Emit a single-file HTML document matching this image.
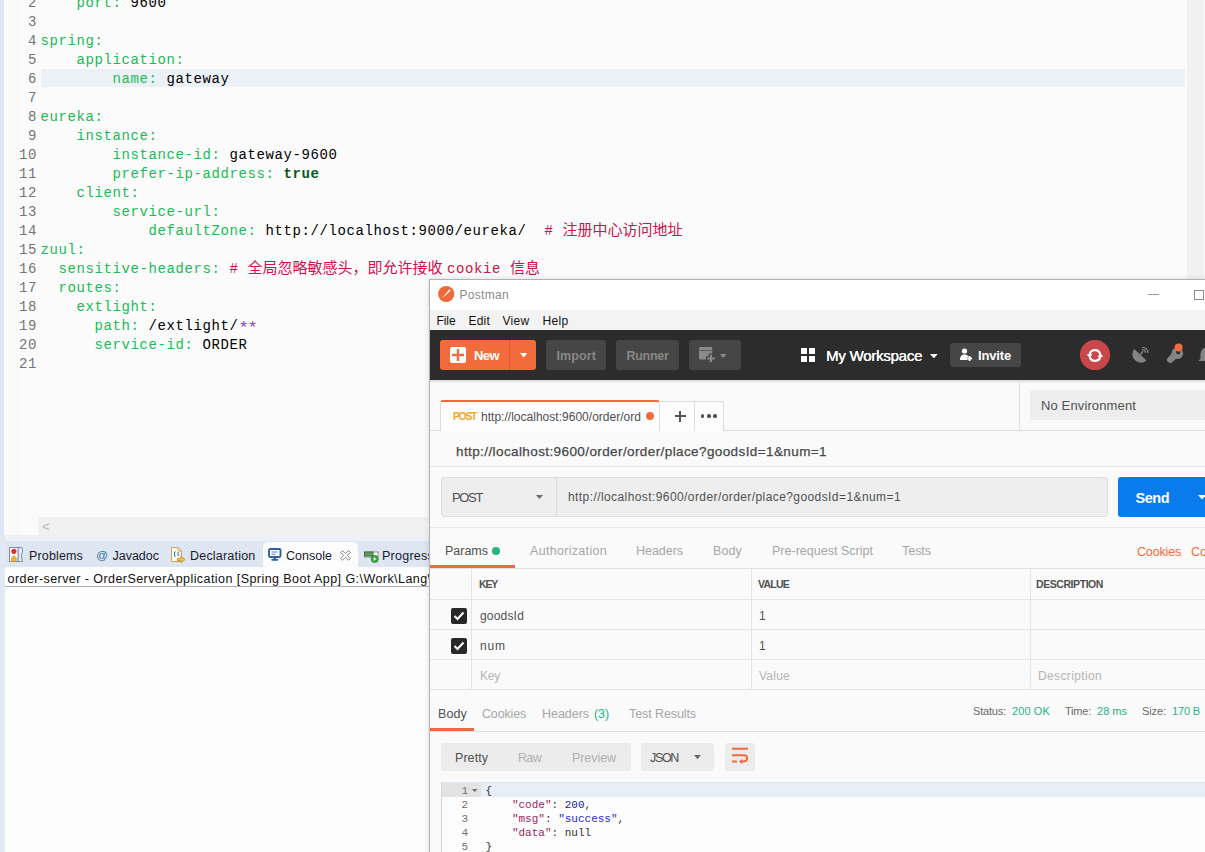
<!DOCTYPE html>
<html><head><meta charset="utf-8"><title>gateway</title>
<style>
html,body{margin:0;padding:0;}
body{width:1205px;height:852px;overflow:hidden;position:relative;background:#fbfbfb;font-family:"Liberation Sans","Noto Sans CJK SC",sans-serif;}
.abs{position:absolute;}
.t{position:absolute;white-space:nowrap;font-family:"Liberation Sans","Noto Sans CJK SC",sans-serif;}
#ed{position:absolute;left:0;top:0;width:1205px;height:535px;background:#fbfbfb;}
#ed .strip{position:absolute;left:0;top:0;width:3.5px;height:540px;background:#dde8f6;}
#ed .ruler{position:absolute;left:8px;top:0;width:13px;height:535px;background:#f9f9f9;}
.ln{position:absolute;left:0;width:37px;text-align:right;font:14px/19px "Liberation Mono",monospace;letter-spacing:.6px;color:#747474;height:19px;}
.cl{position:absolute;left:40.5px;font:14px/19px "Liberation Mono","Noto Sans CJK SC",monospace;letter-spacing:.6px;color:#000;height:19px;white-space:pre;}
.k{color:#20ba56;}
.c{color:#d0104c;}
.b{color:#0a5a1e;font-weight:bold;}
.p{color:#8a3fd0;font-size:17px;line-height:0;letter-spacing:-1.2px;position:relative;top:2.5px;}
.cj{font-family:"Noto Sans CJK SC",sans-serif;font-size:15px;line-height:0;letter-spacing:0;}
#hl{position:absolute;left:41px;top:69px;width:1144px;height:18px;background:#ecf1f7;}
</style></head><body>
<div id="ed"><div class="strip"></div><div class="ruler"></div><div id="hl"></div>
<div class="ln" style="top:-6px">2</div>
<div class="cl" style="top:-6px"><span class="k">    port:</span> 9600</div>
<div class="ln" style="top:13px">3</div>
<div class="ln" style="top:32px">4</div>
<div class="cl" style="top:32px"><span class="k">spring:</span></div>
<div class="ln" style="top:51px">5</div>
<div class="cl" style="top:51px"><span class="k">    application:</span></div>
<div class="ln" style="top:70px">6</div>
<div class="cl" style="top:70px"><span class="k">        name:</span> gateway</div>
<div class="ln" style="top:89px">7</div>
<div class="ln" style="top:108px">8</div>
<div class="cl" style="top:108px"><span class="k">eureka:</span></div>
<div class="ln" style="top:127px">9</div>
<div class="cl" style="top:127px"><span class="k">    instance:</span></div>
<div class="ln" style="top:146px">10</div>
<div class="cl" style="top:146px"><span class="k">        instance-id:</span> gateway-9600</div>
<div class="ln" style="top:165px">11</div>
<div class="cl" style="top:165px"><span class="k">        prefer-ip-address:</span> <span class="b">true</span></div>
<div class="ln" style="top:184px">12</div>
<div class="cl" style="top:184px"><span class="k">    client:</span></div>
<div class="ln" style="top:203px">13</div>
<div class="cl" style="top:203px"><span class="k">        service-url:</span></div>
<div class="ln" style="top:222px">14</div>
<div class="cl" style="top:222px"><span class="k">            defaultZone:</span> http://localhost:9000/eureka/  <span class="c"># </span><span class="c cj">注册中心访问地址</span></div>
<div class="ln" style="top:241px">15</div>
<div class="cl" style="top:241px"><span class="k">zuul:</span></div>
<div class="ln" style="top:260px">16</div>
<div class="cl" style="top:260px"><span class="k">  sensitive-headers:</span> <span class="c"># </span><span class="c cj">全局忽略敏感头，即允许接收</span></div>
<div class="ln" style="top:279px">17</div>
<div class="cl" style="top:279px"><span class="k">  routes:</span></div>
<div class="ln" style="top:298px">18</div>
<div class="cl" style="top:298px"><span class="k">    extlight:</span></div>
<div class="ln" style="top:317px">19</div>
<div class="cl" style="top:317px"><span class="k">      path:</span> /extlight/<span class="p">**</span></div>
<div class="ln" style="top:336px">20</div>
<div class="cl" style="top:336px"><span class="k">      service-id:</span> ORDER</div>
<div class="ln" style="top:355px">21</div>
<div class="cl c" style="top:260px;left:447px">cookie <span class="cj">信息</span></div>
</div>
<div class="abs" style="left:1187px;top:0px;width:17px;height:280px;background:#f1f1f1;"></div>
<div class="abs" style="left:38px;top:517px;width:390px;height:18px;background:#f1f1f1;"></div>
<div class="t " style="left:42px;top:517px;font-size:13px;line-height:19px;color:#c4c4c4;font-weight:bold;">&lt;</div>
<div class="abs" style="left:0px;top:535px;width:430px;height:6px;background:#edf1f7;"></div>
<div class="abs" style="left:5px;top:541px;width:425px;height:26px;background:#dde6f1;"></div>
<div class="abs" style="left:263px;top:541.5px;width:95px;height:26px;background:#fcfcfc;border-radius:5px 5px 0 0;"></div>
<div class="abs" style="left:5px;top:567px;width:425px;height:19px;background:#fdfdfd;"></div>
<div class="abs" style="left:5px;top:586px;width:425px;height:1px;background:#a9b0b8;"></div>
<div class="abs" style="left:5px;top:587px;width:425px;height:265px;background:#fdfdfd;"></div>
<div class="abs" style="left:0px;top:535px;width:5px;height:317px;background:#e0e9f4;"></div>
<div class="t " style="left:29px;top:547px;font-size:12.5px;line-height:18px;color:#1a1a2a;letter-spacing:0.151px;">Problems</div>
<div class="t " style="left:96px;top:546px;font-size:11.5px;line-height:18px;color:#3a6ea5;font-style:italic;">@</div>
<div class="t " style="left:112.5px;top:547px;font-size:12.5px;line-height:18px;color:#1a1a2a;letter-spacing:-0.008px;">Javadoc</div>
<div class="t " style="left:190px;top:547px;font-size:12.5px;line-height:18px;color:#1a1a2a;letter-spacing:0.207px;">Declaration</div>
<div class="t " style="left:286px;top:547px;font-size:12.5px;line-height:18px;color:#1a1a2a;letter-spacing:0.020px;">Console</div>
<div class="t " style="left:382px;top:547px;font-size:12.5px;line-height:18px;color:#1a1a2a;letter-spacing:0.248px;">Progress</div>
<div class="t " style="left:7.5px;top:570px;font-size:12.5px;line-height:18px;color:#101010;letter-spacing:0.439px;">order-server - OrderServerApplication [Spring Boot App] G:\Work\Lang\</div>
<svg class="abs" style="left:9px;top:547px" width="15" height="16" viewBox="0 0 15 16"><path d="M9 .5h3a1.500 1.500 0 0 1 1.500 1.500v3.500a1.500 1.500 0 0 1-1.500 1.500l1.500 7.500h-4.500z" fill="#e6eefa" stroke="#7d8cab"/><rect x=".5" y=".5" width="8.500" height="14" fill="#fff" stroke="#7d8cab"/><circle cx="4.900" cy="4.300" r="2.600" fill="#e23030"/><path d="M2.500 14.500v-3.700l2.400-2.300 2.400 2.300v3.700z" fill="#f2b33d" stroke="#c98a1c" stroke-width=".6"/></svg>
<svg class="abs" style="left:171px;top:547px" width="15" height="16" viewBox="0 0 15 16"><path d="M.5 .5h6.500l3.500 3.500v10.500h-10z" fill="#fffdf6" stroke="#c9a558"/><path d="M7 .5v3.500h3.500" fill="none" stroke="#c9a558"/><path d="M4.500 4.500c-1.500 1-1.500 4 0 5M6 6h2.500M6 8h2.500" fill="none" stroke="#3f6fb0" stroke-width="1.100"/><path d="M6.500 11.300h3.500v-2l4 3.200-4 3.200v-2h-3.500z" fill="#f4c545" stroke="#b98a25" stroke-width=".8"/></svg>
<svg class="abs" style="left:268px;top:548px" width="14" height="13" viewBox="0 0 14 13"><rect x="1" y="1" width="11.500" height="8" rx="1.200" fill="#fff" stroke="#2f5fa8" stroke-width="1.900"/><path d="M3.500 4h6M3.500 6.200h4" stroke="#5a82c0" stroke-width="1"/><path d="M5.500 9.500h2.500v1.500h2v1.700h-6.500v-1.700h2z" fill="#2f5fa8"/></svg>
<svg class="abs" style="left:339.500px;top:549.700px" width="11" height="11" viewBox="0 0 11 11"><path d="M.7 2.500L2.500 .7 5.500 3.700 8.500 .7 10.300 2.500 7.300 5.500 10.300 8.500 8.500 10.300 5.500 7.300 2.500 10.300 .7 8.500 3.700 5.500z" fill="#fdfdfd" stroke="#7a7a7a" stroke-width=".9"/></svg>
<svg class="abs" style="left:364px;top:551px" width="15" height="12" viewBox="0 0 15 12"><rect x=".5" y="1" width="13.500" height="5" fill="#fff" stroke="#8a8f8a"/><rect x=".5" y="1" width="8.500" height="4" fill="#57a357" stroke="#4a6a4a"/><circle cx="10.700" cy="8" r="3.500" fill="#3fae3f" stroke="#1f7a1f" stroke-width=".8"/><path d="M9.700 6.200l2.800 1.800-2.800 1.800z" fill="#fff"/></svg>
<div class="abs" style="left:429px;top:279px;width:790px;height:600px;background:#b0b0b0;box-shadow:0 0 6px rgba(0,0,0,.13);"></div>
<div class="abs" style="left:430px;top:280px;width:775px;height:572px;background:#fafafa;"></div>
<div class="abs" style="left:430px;top:280px;width:775px;height:30px;background:#ffffff;"></div>
<div class="abs" style="left:430px;top:310px;width:775px;height:20px;background:#f3f3f3;"></div>
<svg class="abs" style="left:437px;top:285px" width="19" height="19" viewBox="0 0 19 19"><circle cx="9.200" cy="9" r="8.100" fill="#f0693a"/><path d="M4.600 13.600L10 7.200l2.300-3 1.300 1.200-2.600 2.800z" fill="#fff"/></svg>
<div class="t " style="left:459.5px;top:286px;font-size:12px;line-height:18px;color:#8c8c8c;letter-spacing:0.306px;">Postman</div>
<div class="t " style="left:436.5px;top:312px;font-size:12px;line-height:18px;color:#111;letter-spacing:-0.084px;">File</div>
<div class="t " style="left:468.5px;top:312px;font-size:12px;line-height:18px;color:#111;letter-spacing:0.205px;">Edit</div>
<div class="t " style="left:502.4px;top:312px;font-size:12px;line-height:18px;color:#111;letter-spacing:0.302px;">View</div>
<div class="t " style="left:542.6px;top:312px;font-size:12px;line-height:18px;color:#111;letter-spacing:0.330px;">Help</div>
<div class="abs" style="left:1148px;top:294px;width:11px;height:1px;background:#9a9a9a;"></div>
<div class="abs" style="left:1193.5px;top:289.5px;width:10px;height:10px;background:transparent;border:1px solid #8a8a8a;box-sizing:border-box;"></div>
<div class="abs" style="left:430px;top:330px;width:775px;height:50px;background:#2c2c2c;"></div>
<div class="abs" style="left:440px;top:340px;width:96px;height:30px;background:#f26b3a;border-radius:3px;"></div>
<div class="abs" style="left:509px;top:340px;width:1px;height:30px;background:#e0592a;"></div>
<svg class="abs" style="left:450px;top:347px" width="16" height="16" viewBox="0 0 16 16"><rect width="16" height="16" rx="2" fill="#fff"/><path d="M8 2v12M2 8h12" stroke="#f26b3a" stroke-width="2.400"/></svg>
<div class="t " style="left:474px;top:346px;font-size:13px;line-height:19px;color:#fff;font-weight:bold;letter-spacing:-0.577px;">New</div>
<svg class="abs" style="left:519.5px;top:353px" width="7.5" height="4.5" viewBox="0 0 7.5 4.5"><path d="M0 0h7.5L3.75 4.5z" fill="#fff"/></svg>
<div class="abs" style="left:546px;top:340px;width:60px;height:30px;background:#464646;border-radius:3px;"></div>
<div class="t " style="left:556.5px;top:347px;font-size:12.5px;line-height:18px;color:#888888;font-weight:bold;letter-spacing:0.102px;">Import</div>
<div class="abs" style="left:616px;top:340px;width:63px;height:30px;background:#464646;border-radius:3px;"></div>
<div class="t " style="left:626.5px;top:347px;font-size:12.5px;line-height:18px;color:#888888;font-weight:bold;letter-spacing:-0.292px;">Runner</div>
<div class="abs" style="left:689px;top:340px;width:52px;height:30px;background:#464646;border-radius:3px;"></div>
<svg class="abs" style="left:699px;top:347px" width="18" height="17" viewBox="0 0 18 17"><rect x="0" y="0" width="13.200" height="12.500" rx="1" fill="#8a8a8a"/><rect x="0" y="3" width="13.200" height="1" fill="#5c5c5c"/><path d="M12 6.500v10M7 11.500h10" stroke="#464646" stroke-width="4.500"/><path d="M12 7.700v7.600M8.200 11.500h7.600" stroke="#8a8a8a" stroke-width="2"/></svg>
<svg class="abs" style="left:720.2px;top:353.6px" width="6.5" height="4.2" viewBox="0 0 6.5 4.2"><path d="M0 0h6.5L3.25 4.2z" fill="#8a8a8a"/></svg>
<div class="abs" style="left:801px;top:348.4px;width:6px;height:6px;background:#fff;"></div>
<div class="abs" style="left:809px;top:348.4px;width:6px;height:6px;background:#fff;"></div>
<div class="abs" style="left:801px;top:356.4px;width:6px;height:6px;background:#fff;"></div>
<div class="abs" style="left:809px;top:356.4px;width:6px;height:6px;background:#fff;"></div>
<div class="t " style="left:826px;top:345px;font-size:15px;line-height:21px;color:#fff;letter-spacing:-0.243px;text-shadow:0.3px 0 0 #fff;">My Workspace</div>
<svg class="abs" style="left:930.4px;top:353.7px" width="7.7" height="4.4" viewBox="0 0 7.7 4.4"><path d="M0 0h7.7L3.85 4.4z" fill="#fff"/></svg>
<div class="abs" style="left:950px;top:343px;width:71px;height:24px;background:#464646;border-radius:3px;"></div>
<svg class="abs" style="left:959px;top:348px" width="14" height="14" viewBox="0 0 14 14"><circle cx="5.500" cy="3" r="2.600" fill="#fff"/><path d="M1 12c0-4 2-5.500 4.500-5.500S9 7.500 9.500 9H8v3z" fill="#fff"/><path d="M10.500 8v5M8 10.500h5" stroke="#fff" stroke-width="1.800"/></svg>
<div class="t " style="left:978px;top:346px;font-size:13px;line-height:19px;color:#fff;font-weight:bold;letter-spacing:-0.159px;">Invite</div>
<svg class="abs" style="left:1080px;top:340px" width="31" height="31" viewBox="0 0 31 31"><circle cx="15" cy="15" r="15.100" fill="#c9474a"/><path d="M20.14 13.83A5.40 5.40 0 0 0 9.65 14.75" fill="none" stroke="#fff" stroke-width="2.200"/><path d="M9.86 17.17A5.40 5.40 0 0 0 20.35 16.25" fill="none" stroke="#fff" stroke-width="2.200"/><path d="M6.70 14.30h5.800l-2.900 3.600z" fill="#fff"/><path d="M17.50 16.70h5.800l-2.900 -3.600z" fill="#fff"/></svg>
<svg class="abs" style="left:1131px;top:346px" width="18" height="18" viewBox="0 0 18 18"><path d="M3.300 2.900A8.400 8.400 0 0 0 15.500 14.400z" fill="#848484"/><path d="M9.400 8.600l2.400-3.400" stroke="#848484" stroke-width="1.600"/><path d="M11.300 3.700a3 3 0 0 1 3.200 3.200" stroke="#848484" stroke-width="1.300" fill="none"/><path d="M11.300 1.300a5.300 5.300 0 0 1 5.600 5.600" stroke="#848484" stroke-width="1.300" fill="none"/></svg>
<svg class="abs" style="left:1165px;top:342px" width="21" height="23" viewBox="0 0 21 23"><path d="M5.300 17.700L10 13" stroke="#848484" stroke-width="6.500" stroke-linecap="round"/><circle cx="12.300" cy="11.300" r="5.800" fill="#848484"/><circle cx="13.200" cy="10" r="2.200" fill="#2c2c2c"/><circle cx="13.600" cy="5.400" r="4" fill="#f26b3a"/></svg>
<svg class="abs" style="left:1198px;top:346px" width="8" height="18" viewBox="0 0 8 18"><path d="M8 1.500a6.500 6.500 0 0 0-5.500 6.500v4.500l-2 2.500h7.500z" fill="#848484"/></svg>
<div class="abs" style="left:430px;top:380px;width:775px;height:3px;background:linear-gradient(#d4d4d4,#fafafa);"></div>
<div class="abs" style="left:430px;top:430px;width:775px;height:1px;background:#dcdcdc;"></div>
<div class="abs" style="left:440px;top:400px;width:220px;height:31px;background:#fdfdfd;border:1px solid #dcdcdc;border-bottom:none;border-top:2px solid #f26b3a;border-radius:3px 3px 0 0;box-sizing:border-box;"></div>
<div class="t " style="left:453px;top:408px;font-size:10.5px;line-height:16px;color:#f5a623;font-weight:bold;letter-spacing:-1.397px;">POST</div>
<div class="t " style="left:481px;top:408px;font-size:12px;line-height:18px;color:#505050;letter-spacing:0.018px;">http://localhost:9600/order/ord</div>
<div class="abs" style="left:646.2px;top:412.2px;width:8px;height:8px;background:#f26b3a;border-radius:50%;"></div>
<div class="abs" style="left:660px;top:401px;width:34.5px;height:30px;background:#fdfdfd;border:1px solid #dcdcdc;border-bottom:none;border-left:none;box-sizing:border-box;"></div>
<div class="abs" style="left:694.5px;top:401px;width:29px;height:30px;background:#fdfdfd;border:1px solid #dcdcdc;border-bottom:none;border-left:none;border-radius:0 3px 0 0;box-sizing:border-box;"></div>
<div class="abs" style="left:674.7px;top:415.3px;width:11px;height:1.6px;background:#555;"></div>
<div class="abs" style="left:679.4px;top:410.6px;width:1.6px;height:11px;background:#555;"></div>
<div class="abs" style="left:700.8px;top:414.3px;width:3.7px;height:3.7px;background:#505050;border-radius:50%;"></div>
<div class="abs" style="left:707px;top:414.3px;width:3.7px;height:3.7px;background:#505050;border-radius:50%;"></div>
<div class="abs" style="left:713.2px;top:414.3px;width:3.7px;height:3.7px;background:#505050;border-radius:50%;"></div>
<div class="abs" style="left:1019px;top:381px;width:1px;height:50px;background:#dcdcdc;"></div>
<div class="abs" style="left:1030px;top:390px;width:175px;height:30px;background:#eeeeee;border-radius:3px 0 0 3px;"></div>
<div class="t " style="left:1041px;top:396px;font-size:13px;line-height:19px;color:#505050;letter-spacing:0.128px;">No Environment</div>
<div class="t " style="left:456px;top:442px;font-size:13.5px;line-height:20px;color:#484848;letter-spacing:0.400px;-webkit-text-stroke:0.25px #484848;">http://localhost:9600/order/order/place?goodsId=1&amp;num=1</div>
<div class="abs" style="left:430px;top:466px;width:775px;height:1px;background:#e6e6e6;"></div>
<div class="abs" style="left:441px;top:477px;width:667px;height:40px;background:#eeeeee;border-radius:3px;border:1px solid #dddddd;box-sizing:border-box;"></div>
<div class="abs" style="left:556px;top:477px;width:1px;height:40px;background:#dadada;"></div>
<div class="t " style="left:452px;top:488px;font-size:13px;line-height:19px;color:#505050;letter-spacing:-1.348px;">POST</div>
<svg class="abs" style="left:536px;top:495px" width="7" height="4" viewBox="0 0 7 4"><path d="M0 0h7L3.5 4z" fill="#6a6a6a"/></svg>
<div class="t " style="left:568px;top:488px;font-size:12px;line-height:18px;color:#505050;letter-spacing:0.414px;">http://localhost:9600/order/order/place?goodsId=1&amp;num=1</div>
<div class="abs" style="left:1118px;top:477px;width:90px;height:40px;background:#097bed;border-radius:3px;"></div>
<div class="t " style="left:1135.5px;top:488px;font-size:14.5px;line-height:20px;color:#fff;font-weight:bold;letter-spacing:-0.488px;">Send</div>
<svg class="abs" style="left:1198.4px;top:495.3px" width="8" height="4.5" viewBox="0 0 8 4.5"><path d="M0 0h8L4 4.5z" fill="#fff"/></svg>
<div class="abs" style="left:430px;top:527px;width:775px;height:1px;background:#e6e6e6;"></div>
<div class="t " style="left:445px;top:542px;font-size:12.5px;line-height:18px;color:#505050;letter-spacing:-0.011px;">Params</div>
<div class="abs" style="left:492px;top:546.5px;width:8px;height:8px;background:#26b47f;border-radius:50%;"></div>
<div class="t " style="left:530px;top:542px;font-size:12.5px;line-height:18px;color:#a6a6a6;letter-spacing:0.311px;">Authorization</div>
<div class="t " style="left:636px;top:542px;font-size:12.5px;line-height:18px;color:#a6a6a6;letter-spacing:-0.035px;">Headers</div>
<div class="t " style="left:713px;top:542px;font-size:12.5px;line-height:18px;color:#a6a6a6;letter-spacing:0.127px;">Body</div>
<div class="t " style="left:772px;top:542px;font-size:12.5px;line-height:18px;color:#a6a6a6;letter-spacing:0.015px;">Pre-request Script</div>
<div class="t " style="left:902px;top:542px;font-size:12.5px;line-height:18px;color:#a6a6a6;letter-spacing:-0.035px;">Tests</div>
<div class="t " style="left:1137px;top:543px;font-size:12.5px;line-height:18px;color:#f26b3a;letter-spacing:-0.165px;">Cookies</div>
<div class="t " style="left:1191px;top:543px;font-size:12.5px;line-height:18px;color:#f26b3a;letter-spacing:0.030px;">Code</div>
<div class="abs" style="left:430px;top:565px;width:85px;height:3px;background:#ec6a3c;"></div>
<div class="abs" style="left:430px;top:568px;width:775px;height:1px;background:#e2e2e2;"></div>
<div class="abs" style="left:430px;top:599px;width:775px;height:1px;background:#e9e4e4;"></div>
<div class="abs" style="left:430px;top:629px;width:775px;height:1px;background:#e9e4e4;"></div>
<div class="abs" style="left:430px;top:659px;width:775px;height:1px;background:#e9e4e4;"></div>
<div class="abs" style="left:430px;top:688.5px;width:775px;height:1px;background:#e9e4e4;"></div>
<div class="abs" style="left:471px;top:569px;width:1px;height:120px;background:#e4e4e4;"></div>
<div class="abs" style="left:751px;top:569px;width:1px;height:120px;background:#e4e4e4;"></div>
<div class="abs" style="left:1030px;top:569px;width:1px;height:120px;background:#e4e4e4;"></div>
<div class="t " style="left:479px;top:576px;font-size:10.5px;line-height:16px;color:#505050;font-weight:bold;letter-spacing:-1.196px;">KEY</div>
<div class="t " style="left:758px;top:576px;font-size:10.5px;line-height:16px;color:#505050;font-weight:bold;letter-spacing:-0.761px;">VALUE</div>
<div class="t " style="left:1036px;top:576px;font-size:10.5px;line-height:16px;color:#505050;font-weight:bold;letter-spacing:-0.432px;">DESCRIPTION</div>
<svg class="abs" style="left:451px;top:608px" width="16" height="16" viewBox="0 0 16 16"><rect width="16" height="16" rx="2" fill="#282828"/><path d="M3.500 8l3 3 6-6.500" fill="none" stroke="#fff" stroke-width="2"/></svg>
<svg class="abs" style="left:451px;top:638px" width="16" height="16" viewBox="0 0 16 16"><rect width="16" height="16" rx="2" fill="#282828"/><path d="M3.500 8l3 3 6-6.500" fill="none" stroke="#fff" stroke-width="2"/></svg>
<div class="t " style="left:480px;top:607px;font-size:12px;line-height:18px;color:#505050;letter-spacing:0.185px;">goodsId</div>
<div class="t " style="left:480px;top:637px;font-size:12px;line-height:18px;color:#505050;letter-spacing:0.885px;">num</div>
<div class="t " style="left:480px;top:667px;font-size:12px;line-height:18px;color:#b4b4b4;letter-spacing:-0.226px;">Key</div>
<div class="t " style="left:759px;top:607px;font-size:12px;line-height:18px;color:#505050;">1</div>
<div class="t " style="left:759px;top:637px;font-size:12px;line-height:18px;color:#505050;">1</div>
<div class="t " style="left:759px;top:667px;font-size:12px;line-height:18px;color:#b4b4b4;letter-spacing:0.240px;">Value</div>
<div class="t " style="left:1038px;top:667px;font-size:12px;line-height:18px;color:#b4b4b4;letter-spacing:0.362px;">Description</div>
<div class="t " style="left:438px;top:705px;font-size:12.5px;line-height:18px;color:#505050;letter-spacing:0.127px;">Body</div>
<div class="t " style="left:482px;top:705px;font-size:12.5px;line-height:18px;color:#a6a6a6;letter-spacing:-0.165px;">Cookies</div>
<div class="t " style="left:542px;top:705px;font-size:12.5px;line-height:18px;color:#a6a6a6;letter-spacing:-0.035px;">Headers</div>
<div class="t " style="left:594px;top:705px;font-size:12.5px;line-height:18px;color:#26b47f;letter-spacing:-0.092px;">(3)</div>
<div class="t " style="left:629px;top:705px;font-size:12.5px;line-height:18px;color:#a6a6a6;letter-spacing:-0.090px;">Test Results</div>
<div class="abs" style="left:430px;top:728px;width:44px;height:3px;background:#ec6a3c;"></div>
<div class="abs" style="left:430px;top:731px;width:775px;height:1px;background:#e2e2e2;"></div>
<div class="t " style="left:973px;top:703px;font-size:11px;line-height:17px;color:#6a6a6a;letter-spacing:-0.177px;">Status:</div>
<div class="t " style="left:1012px;top:703px;font-size:11px;line-height:17px;color:#26b47f;letter-spacing:0.116px;">200 OK</div>
<div class="t " style="left:1065px;top:703px;font-size:11px;line-height:17px;color:#6a6a6a;letter-spacing:-0.218px;">Time:</div>
<div class="t " style="left:1097px;top:703px;font-size:11px;line-height:17px;color:#26b47f;letter-spacing:0.009px;">28 ms</div>
<div class="t " style="left:1142px;top:703px;font-size:11px;line-height:17px;color:#6a6a6a;letter-spacing:-0.091px;">Size:</div>
<div class="t " style="left:1172px;top:703px;font-size:11px;line-height:17px;color:#26b47f;letter-spacing:-0.149px;">170 B</div>
<div class="abs" style="left:441px;top:743px;width:190px;height:28px;background:#ececec;border-radius:3px;"></div>
<div class="t " style="left:455px;top:749px;font-size:12.5px;line-height:18px;color:#505050;letter-spacing:0.059px;">Pretty</div>
<div class="t " style="left:518px;top:749px;font-size:12.5px;line-height:18px;color:#b0b0b0;letter-spacing:-0.668px;">Raw</div>
<div class="t " style="left:572px;top:749px;font-size:12.5px;line-height:18px;color:#b0b0b0;letter-spacing:-0.065px;">Preview</div>
<div class="abs" style="left:641px;top:743px;width:73px;height:28px;background:#ececec;border-radius:3px;"></div>
<div class="t " style="left:650px;top:749px;font-size:12.5px;line-height:18px;color:#505050;letter-spacing:-1.334px;">JSON</div>
<svg class="abs" style="left:693.7px;top:755px" width="7" height="4.2" viewBox="0 0 7 4.2"><path d="M0 0h7L3.5 4.2z" fill="#6a6a6a"/></svg>
<div class="abs" style="left:725px;top:743px;width:30px;height:28px;background:#ececec;border-radius:3px;"></div>
<svg class="abs" style="left:731px;top:746px" width="19" height="19" viewBox="0 0 19 19"><path d="M1 2.700h16M1 9.200h12a3.100 3.100 0 0 1 0 6.200h-2.500M1 15.400h5" fill="none" stroke="#ee6a38" stroke-width="2"/><path d="M11.300 12.800L8 15.400l3.300 2.600z" fill="#ee6a38"/></svg>
<div class="abs" style="left:441px;top:782px;width:764px;height:70px;background:#fcfcfc;"></div>
<div class="abs" style="left:441px;top:782px;width:764px;height:1px;background:#dce6f0;"></div>
<div class="abs" style="left:441px;top:783px;width:764px;height:14px;background:#e8eef5;"></div>
<div class="abs" style="left:441px;top:783px;width:40px;height:14px;background:#e3e3e3;"></div>
<div class="abs" style="left:441px;top:782px;width:1px;height:70px;background:#d6d6d6;"></div>
<div class="t" style="left:442px;width:26px;text-align:right;top:784px;font-size:11px;line-height:14px;color:#707070;font-family:'Liberation Mono',monospace;">1</div>
<div class="t" style="left:442px;width:26px;text-align:right;top:798px;font-size:11px;line-height:14px;color:#707070;font-family:'Liberation Mono',monospace;">2</div>
<div class="t" style="left:442px;width:26px;text-align:right;top:812px;font-size:11px;line-height:14px;color:#707070;font-family:'Liberation Mono',monospace;">3</div>
<div class="t" style="left:442px;width:26px;text-align:right;top:826px;font-size:11px;line-height:14px;color:#707070;font-family:'Liberation Mono',monospace;">4</div>
<div class="t" style="left:442px;width:26px;text-align:right;top:840px;font-size:11px;line-height:14px;color:#707070;font-family:'Liberation Mono',monospace;">5</div>
<svg class="abs" style="left:472px;top:789.3px" width="5.5" height="3.2" viewBox="0 0 5.5 3.2"><path d="M0 0h5.5L2.75 3.2z" fill="#707070"/></svg>
<div class="t" style="left:485.5px;top:784px;font-size:11px;line-height:14px;white-space:pre;font-family:'Liberation Mono',monospace;"><span style="color:#303030">{</span></div>
<div class="t" style="left:485.5px;top:798px;font-size:11px;line-height:14px;white-space:pre;font-family:'Liberation Mono',monospace;"><span style="color:#303030">    </span><span style="color:#9c1f62">&quot;code&quot;</span><span style="color:#303030">: </span><span style="color:#1a1a9a">200</span><span style="color:#303030">,</span></div>
<div class="t" style="left:485.5px;top:812px;font-size:11px;line-height:14px;white-space:pre;font-family:'Liberation Mono',monospace;"><span style="color:#303030">    </span><span style="color:#9c1f62">&quot;msg&quot;</span><span style="color:#303030">: </span><span style="color:#2a2ad0">&quot;success&quot;</span><span style="color:#303030">,</span></div>
<div class="t" style="left:485.5px;top:826px;font-size:11px;line-height:14px;white-space:pre;font-family:'Liberation Mono',monospace;"><span style="color:#303030">    </span><span style="color:#9c1f62">&quot;data&quot;</span><span style="color:#303030">: </span><span style="color:#303030">null</span></div>
<div class="t" style="left:485.5px;top:840px;font-size:11px;line-height:14px;white-space:pre;font-family:'Liberation Mono',monospace;"><span style="color:#303030">}</span></div>
</body></html>
